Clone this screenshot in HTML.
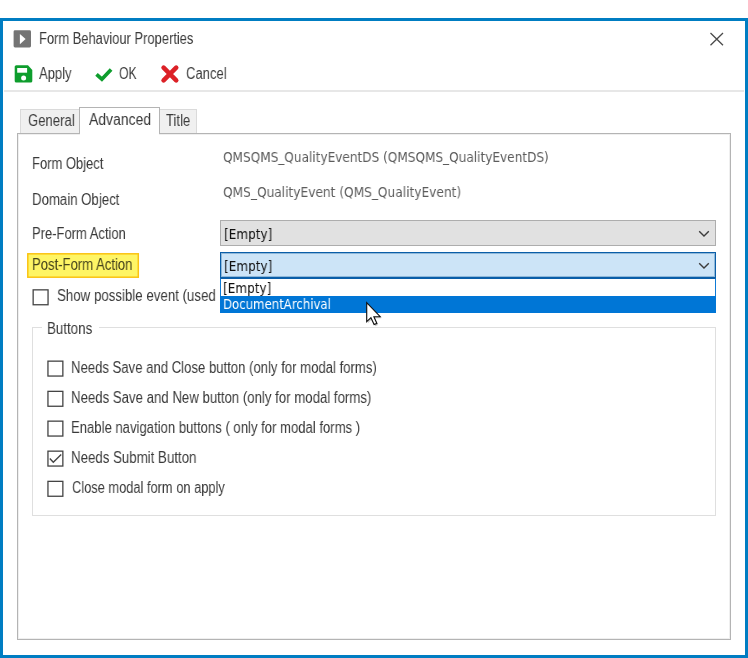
<!DOCTYPE html>
<html><head><meta charset="utf-8"><title>Form Behaviour Properties</title>
<style>
html,body{margin:0;padding:0;background:#fff;}
body{width:748px;height:658px;position:relative;overflow:hidden;font-family:"Liberation Sans",sans-serif;}
.abs{position:absolute;}
#win{left:0;top:18px;width:742px;height:634px;border:3px solid #007dc2;background:#fff;}
.t{position:absolute;white-space:nowrap;line-height:20px;height:20px;transform-origin:0 0;will-change:transform;}
.ls{font-family:"Liberation Sans",sans-serif;}
.dv{font-family:"DejaVu Sans",sans-serif;}
</style></head><body>
<div id="win" class="abs"></div>

<!-- title bar -->
<svg class="abs" style="left:13px;top:30px" width="19" height="18" viewBox="0 0 19 18"><rect x="0.6" y="0.3" width="17.4" height="17.2" rx="1.4" fill="#747474"/><path d="M6.9 4 L12.6 9 L6.9 14.2 Z" fill="#fff"/></svg>
<span class="t ls" style="left:39.18px;top:28.80px;font-size:15.80px;color:#3a3a3a;transform:scaleX(0.8179);">Form Behaviour Properties</span>
<svg class="abs" style="left:707px;top:30px" width="19" height="18" viewBox="0 0 19 18"><path d="M3.5 3 L16 15.2 M16 3 L3.5 15.2" stroke="#4a4a4a" stroke-width="1.3" fill="none"/></svg>

<!-- toolbar -->
<svg class="abs" style="left:14px;top:65px" width="19" height="18" viewBox="0 0 19 18">
<path d="M2.3 0.2 H14 L18.3 4.9 V16 Q18.3 17.6 16.7 17.6 H2.3 Q0.7 17.6 0.7 16 V1.8 Q0.7 0.2 2.3 0.2 Z" fill="#0e9d2d"/>
<rect x="3.2" y="3" width="9.9" height="4.7" fill="#fff"/>
<circle cx="9.6" cy="12.9" r="2.5" fill="#fff"/></svg>
<span class="t ls" style="left:38.60px;top:63.60px;font-size:15.80px;color:#3a3a3a;transform:scaleX(0.8261);">Apply</span>
<svg class="abs" style="left:93px;top:65px" width="21" height="17" viewBox="0 0 21 17"><path d="M3.5 9.3 L8.9 14.2 L18.1 4.5" stroke="#0e9d2d" stroke-width="3.7" fill="none"/></svg>
<span class="t ls" style="left:119.30px;top:63.60px;font-size:15.80px;color:#3a3a3a;transform:scaleX(0.7734);">OK</span>
<svg class="abs" style="left:160px;top:64px" width="20" height="20" viewBox="0 0 20 20"><path d="M3.6 3.7 L16.2 16.3 M16.2 3.7 L3.6 16.3" stroke="#dc2127" stroke-width="4.6" stroke-linecap="round" fill="none"/></svg>
<span class="t ls" style="left:185.70px;top:63.60px;font-size:15.80px;color:#3a3a3a;transform:scaleX(0.8248);">Cancel</span>
<div class="abs" style="left:4px;top:90px;width:740px;height:2px;background:#e7e7e7;"></div>

<!-- tab panel -->
<div class="abs" style="left:17px;top:133px;width:712px;height:505px;border:1px solid #b4b4b4;background:#fff;box-shadow:inset 0 0 0 1px #efefef;"></div>
<!-- tabs -->
<div class="abs" style="left:20px;top:109px;width:60px;height:24px;border:1px solid #dadada;border-bottom:none;background:#f0f0f0;box-sizing:border-box;"></div>
<div class="abs" style="left:159px;top:109px;width:38px;height:24px;border:1px solid #dadada;border-left:none;border-bottom:none;background:#f0f0f0;box-sizing:border-box;"></div>
<div class="abs" style="left:79px;top:107px;width:81px;height:27px;border:1px solid #b4b4b4;border-bottom:none;background:#fff;box-sizing:border-box;"></div>
<div class="abs" style="left:80px;top:133px;width:79px;height:2px;background:#fff;"></div>
<span class="t ls" style="left:28.00px;top:110.70px;font-size:15.80px;color:#3a3a3a;transform:scaleX(0.8304);">General</span>
<span class="t ls" style="left:88.80px;top:109.80px;font-size:15.80px;color:#3a3a3a;transform:scaleX(0.8831);">Advanced</span>
<span class="t ls" style="left:165.80px;top:110.80px;font-size:15.80px;color:#3a3a3a;transform:scaleX(0.8285);">Title</span>

<!-- labels -->
<span class="t ls" style="left:32.18px;top:153.80px;font-size:15.80px;color:#3a3a3a;transform:scaleX(0.8215);">Form Object</span>
<span class="t ls" style="left:32.16px;top:190.30px;font-size:15.80px;color:#3a3a3a;transform:scaleX(0.8366);">Domain Object</span>
<span class="t ls" style="left:32.18px;top:223.80px;font-size:15.80px;color:#3a3a3a;transform:scaleX(0.8223);">Pre-Form Action</span>
<svg class="abs" style="left:20px;top:246px" width="130" height="40" viewBox="20 246 130 40"><rect x="27.8" y="253.8" width="110.5" height="23.4" fill="#fef565" stroke="#fac311" stroke-width="1.5"/></svg>
<span class="t ls" style="left:32.17px;top:255.30px;font-size:15.80px;color:#45431c;transform:scaleX(0.8292);">Post-Form Action</span>
<span class="t dv" style="left:223.40px;top:146.70px;font-size:13.97px;color:#5c5c5c;transform:scaleX(0.8663);">QMSQMS_QualityEventDS (QMSQMS_QualityEventDS)</span>
<span class="t dv" style="left:223.40px;top:182.20px;font-size:13.97px;color:#5c5c5c;transform:scaleX(0.8725);">QMS_QualityEvent (QMS_QualityEvent)</span>

<!-- combos -->
<div class="abs" style="left:220px;top:220px;width:496px;height:26px;box-sizing:border-box;border:1px solid #adadad;background:#e1e1e1;"></div>
<span class="t dv" style="left:223.54px;top:224.20px;font-size:13.97px;color:#111;transform:scaleX(0.8625);">[Empty]</span>
<svg class="abs" style="left:698px;top:229px" width="13" height="9" viewBox="0 0 13 9"><path d="M1.2 2.3 L6 7 L10.8 2.3" stroke="#3c3c3c" stroke-width="1.4" fill="none"/></svg>
<div class="abs" style="left:220px;top:252px;width:496px;height:26px;box-sizing:border-box;border:1px solid #0a5ea8;background:#cce4f7;box-shadow:inset 0 0 0 1px rgba(0,84,153,.3);"></div>
<span class="t dv" style="left:223.54px;top:255.50px;font-size:13.97px;color:#111;transform:scaleX(0.8625);">[Empty]</span>
<svg class="abs" style="left:698px;top:260.5px" width="13" height="9" viewBox="0 0 13 9"><path d="M1.2 2.3 L6 7 L10.8 2.3" stroke="#3c3c3c" stroke-width="1.4" fill="none"/></svg>

<!-- checkboxes -->
<svg class="abs" style="left:0;top:0" width="748" height="658" viewBox="0 0 748 658">
<rect x="33.15" y="289.85" width="14.90" height="14.90" fill="#fff" stroke="#444" stroke-width="1.3"/>
<rect x="47.95" y="361.15" width="14.90" height="14.90" fill="#fff" stroke="#444" stroke-width="1.3"/>
<rect x="47.95" y="391.35" width="14.90" height="14.90" fill="#fff" stroke="#444" stroke-width="1.3"/>
<rect x="47.95" y="421.15" width="14.90" height="14.90" fill="#fff" stroke="#444" stroke-width="1.3"/>
<rect x="47.95" y="451.15" width="14.90" height="14.90" fill="#fff" stroke="#444" stroke-width="1.3"/>
<rect x="47.95" y="481.35" width="14.90" height="14.90" fill="#fff" stroke="#444" stroke-width="1.3"/>
<path d="M49.8 458.6 L53.3 462.3 L61.2 454.4" stroke="#444" stroke-width="1.4" fill="none"/>
</svg>
<span class="t ls" style="left:56.60px;top:286.40px;font-size:15.80px;color:#3a3a3a;transform:scaleX(0.8412);">Show possible event (used</span>

<!-- group box -->
<div class="abs" style="left:32px;top:327px;width:684px;height:189px;box-sizing:border-box;border:1px solid #dfdfdf;"></div>
<div class="abs" style="left:42px;top:326px;width:57px;height:3px;background:#fff;"></div>
<span class="t ls" style="left:47.26px;top:318.60px;font-size:15.80px;color:#3a3a3a;transform:scaleX(0.8437);">Buttons</span>
<span class="t ls" style="left:71.27px;top:357.70px;font-size:15.80px;color:#3a3a3a;transform:scaleX(0.8311);">Needs Save and Close button (only for modal forms)</span>
<span class="t ls" style="left:71.26px;top:387.70px;font-size:15.80px;color:#3a3a3a;transform:scaleX(0.8364);">Needs Save and New button (only for modal forms)</span>
<span class="t ls" style="left:71.27px;top:417.70px;font-size:15.80px;color:#3a3a3a;transform:scaleX(0.8294);">Enable navigation buttons ( only for modal forms )</span>
<span class="t ls" style="left:71.26px;top:447.70px;font-size:15.80px;color:#3a3a3a;transform:scaleX(0.8402);">Needs Submit Button</span>
<span class="t ls" style="left:72.10px;top:477.50px;font-size:15.80px;color:#3a3a3a;transform:scaleX(0.8130);">Close modal form on apply</span>

<!-- dropdown list -->
<div class="abs" style="left:220px;top:278px;width:496px;height:35px;box-sizing:border-box;border:1px solid #0f7bd6;border-top-color:#0a5ea8;background:#fff;"></div>
<span class="t dv" style="left:222.54px;top:277.70px;font-size:13.97px;color:#111;transform:scaleX(0.8625);">[Empty]</span>
<div class="abs" style="left:220px;top:295.5px;width:496px;height:17.5px;background:#0076d6;"></div>
<span class="t dv" style="left:222.66px;top:293.80px;font-size:13.97px;color:#fff;transform:scaleX(0.8397);">DocumentArchival</span>

<!-- cursor -->
<svg class="abs" style="left:360px;top:296px" width="30" height="36" viewBox="360 296 30 36"><path d="M367.8 304 V323.2 L372 319.2 L375.2 326.2 L378 325 L375 318.2 H381.4 Z" fill="#000" opacity=".22"/><path d="M366.7 302.6 V321.6 L370.9 317.7 L374.1 324.6 L376.9 323.4 L373.9 316.7 H380.2 Z" fill="#fff" stroke="#111" stroke-width="1.15" stroke-linejoin="miter"/></svg>
</body></html>
